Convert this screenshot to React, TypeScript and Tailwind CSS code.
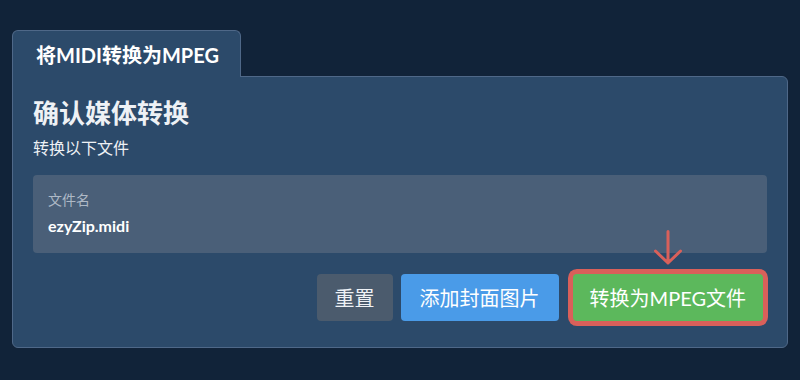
const FONT = "font-['Lato','Noto_Sans_CJK_SC',sans-serif]";

export default function App() {
  return (
    <div className={`w-full h-[380px] bg-[#112339] pt-[30px] px-3 ${FONT}`}>
      {/* Tab */}
      <div className="relative z-10 -mb-px w-[229px] h-[47px] rounded-t-md border border-b-0 border-[#4f6888] bg-[#2c4a6a] pl-[23px] pt-[10px]">
        <span className="text-white text-[20px] font-bold leading-[28px]">将MIDI转换为MPEG</span>
      </div>

      {/* Panel */}
      <div className="h-[272px] rounded-b-md rounded-tr-md border border-[#4f6888] bg-[#2c4a6a] px-5 pt-[19px]">
        <h1 className="text-[#eef1f5] text-[26px] font-bold leading-[34px]">确认媒体转换</h1>
        <p className="text-[#eef1f5] text-[16px] leading-[22px] mt-[7px]">转换以下文件</p>

        <div className="mt-[16px] h-[78px] rounded bg-[#4a5f78] px-[15px] pt-[15px]">
          <div className="text-[#aeb9c6] text-[14px] leading-[20px]">文件名</div>
          <div className="text-white text-[16px] font-bold leading-[22px] mt-[5px]">ezyZip.midi</div>
        </div>

        <div className="flex justify-end items-center gap-2 mt-[21px]">
          <button className="h-[47px] px-[18px] rounded bg-[#4b5b6d] text-[#eef1f5] text-[20px]">重置</button>
          <button className="h-[47px] px-[19px] rounded bg-[#4a9be8] text-white text-[20px]">添加封面图片</button>
          <div className="relative ml-[6px] mr-[4px]">
            <svg className="absolute left-1/2 -translate-x-1/2 bottom-full mb-[8px]" width="30" height="36" viewBox="0 0 30 36" fill="none">
              <path d="M15 1.5 V33 M2.5 21 L15 33 L27.5 21" stroke="#d9605a" strokeWidth="3" strokeLinecap="round" strokeLinejoin="round" />
            </svg>
            <button className="h-[47px] px-[17px] rounded-sm bg-[#5cb85c] text-white text-[20px] ring-[5px] ring-[#d9605a]">转换为MPEG文件</button>
          </div>
        </div>
      </div>
    </div>
  );
}
